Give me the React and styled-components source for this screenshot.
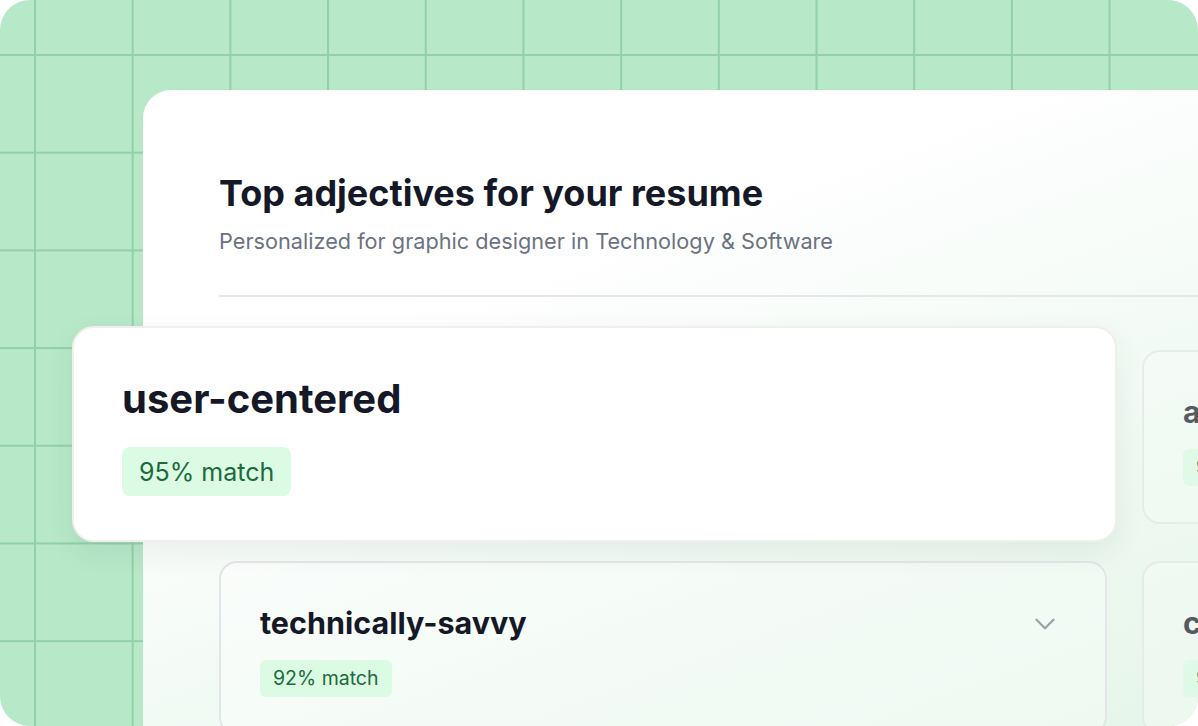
import styled, { createGlobalStyle } from 'styled-components';
import { ChevronDown } from 'lucide-react';

const GlobalStyle = createGlobalStyle`
  body {
    margin: 0;
    background: #ffffff;
    font-family: Inter, "Noto Sans", sans-serif;
  }
`;

const Frame = styled.div`
  width: 1198px;
  height: 726px;
  border-radius: 30px;
  overflow: hidden;
  display: flex;
  padding: 90px 0 0 143px;
  box-sizing: border-box;
  background-color: #b7e8c8;
  background-image:
    linear-gradient(to right, #92d0a8 2px, transparent 2px),
    linear-gradient(to bottom, #92d0a8 2px, transparent 2px);
  background-size: 97.7px 97.7px;
  background-position: 34px 54px;
`;

const Panel = styled.section`
  flex: 1;
  min-width: 0;
  border-top-left-radius: 28px;
  padding: 82px 0 0 76px;
  background: linear-gradient(160deg, #ffffff 30%, #eff9f2 70%, #e6f6ea 100%);

  h1 {
    margin: 0;
    font-size: 36px;
    line-height: 1.2;
    font-weight: 700;
    color: #151827;
  }

  p {
    margin: 13px 0 0;
    font-size: 21.7px;
    line-height: 1.2;
    color: #6b7280;
  }
`;

const Divider = styled.hr`
  margin: 41px 0 0;
  border: 0;
  height: 2px;
  background: #e4e6e9;
`;

const Grid = styled.div`
  margin-top: 53px;
  display: grid;
  grid-template-columns: 888px 888px;
  grid-auto-rows: 174px;
  column-gap: 35px;
  row-gap: 37px;
  width: max-content;
`;

const Slot = styled.div`
  position: relative;
`;

const Card = styled.div`
  height: 100%;
  box-sizing: border-box;
  border: 2px solid #e3e6e8;
  border-radius: 18px;
  padding: 42px 43px 0 39px;
  background: rgba(255, 255, 255, 0.35);
  opacity: ${(p) => (p.$faded ? 0.7 : 1)};
`;

const CardHead = styled.div`
  display: flex;
  align-items: center;
  justify-content: space-between;
  color: #9ca1a8;
`;

const Word = styled.h2`
  margin: 0;
  font-size: ${(p) => (p.$big ? 40 : 30.5)}px;
  line-height: 1.2;
  font-weight: 700;
  color: #151827;
`;

const Badge = styled.span`
  display: inline-flex;
  align-items: center;
  margin-top: ${(p) => (p.$big ? 24 : 18)}px;
  height: ${(p) => (p.$big ? 49 : 37)}px;
  padding: 0 ${(p) => (p.$big ? 17 : 13)}px;
  border-radius: ${(p) => (p.$big ? 8 : 6)}px;
  background: #dcfbe5;
  color: #1d6a3c;
  font-size: ${(p) => (p.$big ? 25 : 19.5)}px;
`;

const Popped = styled.div`
  position: absolute;
  left: -147px;
  top: -24px;
  width: 1045px;
  height: 216px;
  box-sizing: border-box;
  border: 2px solid #f1efec;
  border-radius: 22px;
  background: #ffffff;
  box-shadow: 0 10px 30px rgba(30, 60, 40, 0.07);
  padding: 47px 48px 0 48px;
  z-index: 2;
`;

const adjectives = [
  { word: 'user-centered', match: 95 },
  { word: 'adaptable', match: 94 },
  { word: 'technically-savvy', match: 92 },
  { word: 'collaborative', match: 91 },
];

export default function App() {
  return (
    <>
      <GlobalStyle />
      <Frame>
        <Panel>
          <h1>Top adjectives for your resume</h1>
          <p>Personalized for graphic designer in Technology &amp; Software</p>
          <Divider />
          <Grid>
            {adjectives.map((a, i) => (
              <Slot key={a.word}>
                {i === 0 ? (
                  <Popped>
                    <Word $big>{a.word}</Word>
                    <Badge $big>{a.match}% match</Badge>
                  </Popped>
                ) : (
                  <Card $faded={i % 2 === 1}>
                    <CardHead>
                      <Word>{a.word}</Word>
                      {i === 2 && <ChevronDown size={34} strokeWidth={1.6} />}
                    </CardHead>
                    <Badge>{a.match}% match</Badge>
                  </Card>
                )}
              </Slot>
            ))}
          </Grid>
        </Panel>
      </Frame>
    </>
  );
}
